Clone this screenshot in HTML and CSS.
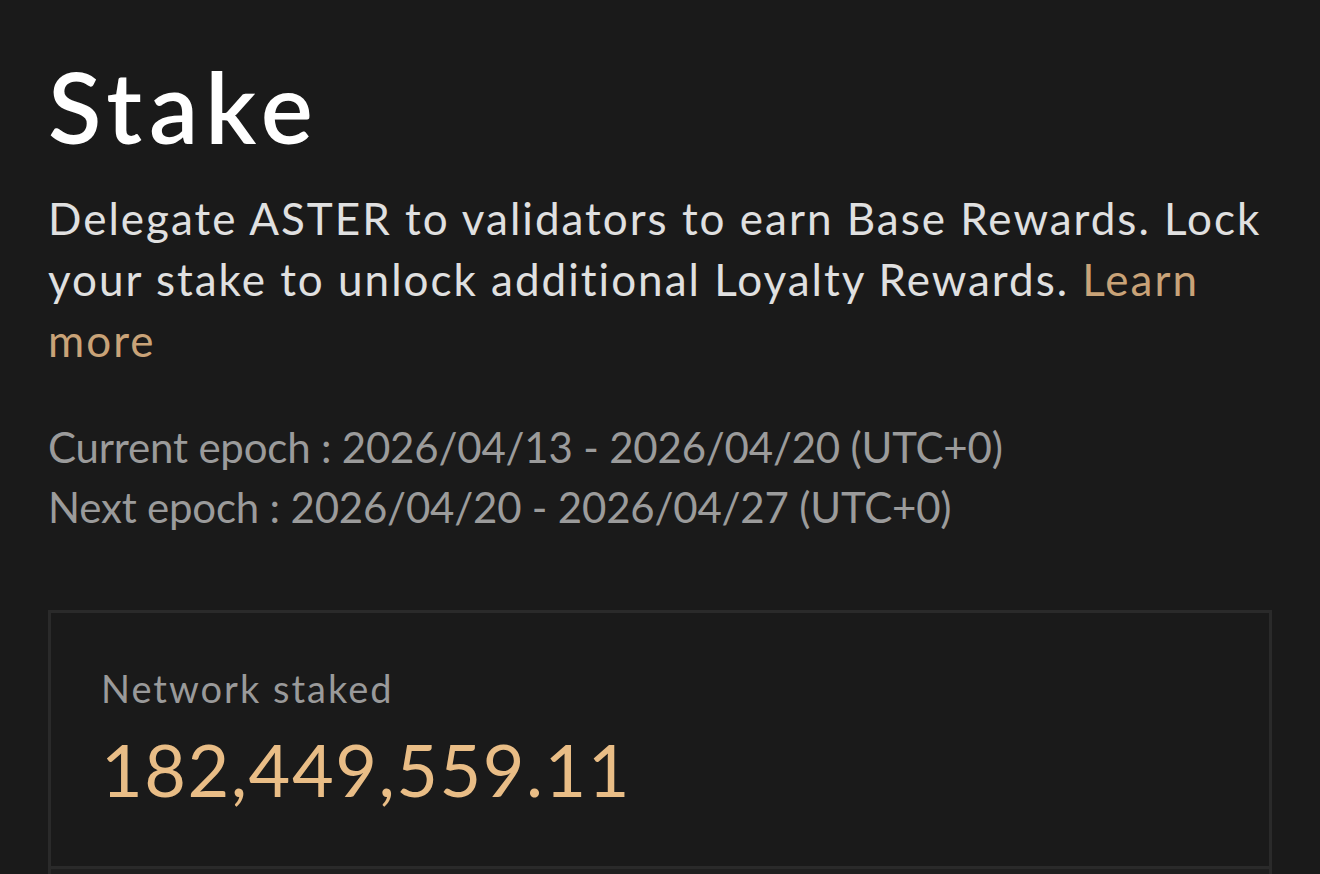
FILE: index.html
```html
<!DOCTYPE html>
<html lang="en">
<head>
    <meta charset="UTF-8">
    <meta name="viewport" content="width=device-width, initial-scale=1.0">
    <title>Stake</title>
    <link rel="stylesheet" href="styles.css">
</head>
<body>
    <div class="page">
        <h1 class="title">Stake</h1>
        <p class="intro">Delegate ASTER to validators to earn Base Rewards. Lock your stake to unlock additional Loyalty Rewards. <a href="#" class="learn">Learn more</a></p>

        <div class="epochs">
            <div>Current epoch : 2026/04/13 - 2026/04/20 (UTC+0)</div>
            <div>Next epoch : 2026/04/20 - 2026/04/27 (UTC+0)</div>
        </div>

        <div class="card">
            <div class="card-top">
                <div class="label">Network staked</div>
                <div class="amount">182,449,559.11</div>
            </div>
            <div class="card-bottom"></div>
        </div>
    </div>
</body>
</html>
```

FILE: styles.css
```css
body {
    margin: 0;
    background: #1a1a1a;
    font-family: Lato, "Open Sans", sans-serif;
    color: #e4e4e4;
}

.page {
    padding: 46px 48px 0 48px;
}

.title {
    margin: 0;
    font-size: 98px;
    font-weight: 600;
    line-height: 120px;
    letter-spacing: 7px;
    color: #ffffff;
}

.intro {
    margin: 22px 0 0 0;
    font-size: 44px;
    line-height: 61px;
    letter-spacing: 2px;
    color: #e0e0e0;
}

.learn {
    color: #c9a378;
    text-decoration: none;
}

.epochs {
    margin-top: 46px;
    font-size: 42px;
    line-height: 60px;
    letter-spacing: -0.2px;
    color: #9b9b9b;
}

.card {
    margin-top: 73px;
    border: 3px solid #2a2a2a;
}

.card-top {
    padding: 50px 50px 55px 50px;
}

.label {
    font-size: 38px;
    line-height: 50px;
    letter-spacing: 2px;
    color: #9a9a9a;
}

.amount {
    margin-top: 14px;
    font-size: 72px;
    line-height: 84px;
    letter-spacing: 1.5px;
    color: #e9bd86;
}

.card-bottom {
    height: 200px;
    border-top: 3px solid #2a2a2a;
    background: #1f1f1f;
}
```
